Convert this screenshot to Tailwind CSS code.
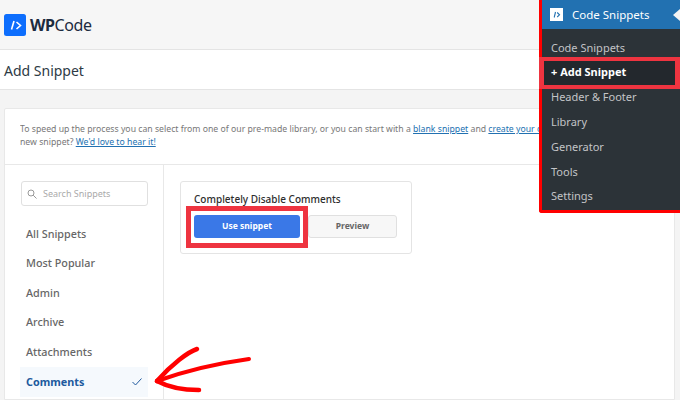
<!DOCTYPE html>
<html lang="en">
<head>
  <meta charset="UTF-8">
  <script src="https://cdn.jsdelivr.net/npm/@tailwindcss/browser@4"></script>
  <title>Add Snippet</title>
</head>
<body class="relative w-[680px] h-[400px] overflow-hidden bg-[#f4f4f4] font-['Noto_Sans',sans-serif] text-[#3c434a]">
  <header class="h-[50px] bg-[#f6f6f6] border-b border-[#e4e4e4] pl-1 flex items-center gap-[4px]">
    <svg class="w-[22px] h-[22px]" viewBox="0 0 22 22"><rect width="22" height="22" rx="2.5" fill="#0d6efd"/><path d="M10 7 L7.5 15.5" stroke="#fff" stroke-width="1.6" fill="none"/><path d="M12.5 8 L16.5 11.5 L12.5 15" stroke="#fff" stroke-width="1.6" fill="none"/></svg>
    <span class="text-[16px] leading-none text-[#1c2b3f] tracking-[-0.4px]"><b class="font-bold">WP</b>Code</span>
  </header>
  <div class="h-[40px] bg-white border-b border-[#e4e4e4] pl-1 pt-[1px] flex items-center text-[14px] text-[#2d3a45]">Add Snippet</div>

  <main class="mt-[18px] ml-1 mr-[5px] h-[292px] bg-white border border-[#e8e8e8] rounded-t-[2px]">
    <section class="h-[56px] border-b border-[#e8e8e8] pl-[15px] pt-[14px] text-[8.7px] leading-[13px] text-[#777]">
      <p class="w-[519px] overflow-hidden whitespace-nowrap">To speed up the process you can select from one of our pre-made library, or you can start with a <a class="text-[#2271b1] underline">blank snippet</a> and <a class="text-[#2271b1] underline">create your own</a>. Have a suggestion for a<br>new snippet? <a class="text-[#2271b1] underline">We'd love to hear it!</a></p>
    </section>
    <div class="flex h-[235px]">
      <aside class="w-[159px] border-r border-[#e8e8e8] pl-[15px] pr-[15px] pt-4 shrink-0">
        <div class="h-[25px] ml-[1px] border border-[#e0e0e0] rounded-[3px] flex items-center gap-[6px] pl-[5px] pt-[1px] text-[9px] text-[#aaa]">
          <svg class="w-[10px] h-[10px]" viewBox="0 0 10 10" fill="none" stroke="#999" stroke-width="1"><circle cx="4" cy="4" r="3"/><path d="M6.2 6.2 L9.5 9.5"/></svg>
          <span>Search Snippets</span>
        </div>
        <ul class="mt-[13px] text-[10.8px] font-medium text-[#666]">
          <li class="h-[29.6px] pl-[6px] flex items-center">All Snippets</li>
          <li class="h-[29.6px] pl-[6px] flex items-center">Most Popular</li>
          <li class="h-[29.6px] pl-[6px] flex items-center">Admin</li>
          <li class="h-[29.6px] pl-[6px] flex items-center">Archive</li>
          <li class="h-[29.6px] pl-[6px] flex items-center">Attachments</li>
          <li class="h-[30px] pl-[6px] pr-[6px] flex items-center justify-between bg-[#f5f9fd] font-bold text-[#205a9e]">
            <span>Comments</span>
            <svg class="w-[10px] h-[8px]" viewBox="0 0 10 8" fill="none" stroke="#205a9e" stroke-width="1"><path d="M0.5 4 L3.5 7 L9.5 0.5"/></svg>
          </li>
        </ul>
      </aside>
      <div class="pl-4 pt-4">
        <article class="w-[232px] h-[73px] border border-[#e4e4e4] rounded-[3px] px-[13px] pt-[10px]">
          <h3 class="text-[10px] leading-[14px] font-medium text-[#2d2d2d]">Completely Disable Comments</h3>
          <div class="flex mt-[9px] gap-[8px]">
            <button class="w-[106px] h-[23px] rounded-[3px] bg-[#3a78e7] text-white text-[8.5px] font-bold">Use snippet</button>
            <button class="w-[89px] h-[23px] rounded-[3px] bg-[#f7f7f7] border border-[#e0e0e0] text-[#666] text-[8.5px] font-bold">Preview</button>
          </div>
        </article>
      </div>
    </div>
  </main>

  <!-- screenshot annotations and the wp menu sit over the page -->
  <nav class="absolute left-[539px] top-0 w-[141px] h-[213px] border-[3px] border-t-0 border-r-0 border-[#f00] rounded-bl-[3px] bg-[#2c3338] text-[#c3c4c7] text-[11px]">
    <div class="h-[29px] bg-[#2271b1] flex items-center pl-[8px] gap-[9px] text-white text-[11.5px]">
      <svg class="w-[13px] h-[13px]" viewBox="0 0 13 13"><rect width="13" height="13" fill="#fff"/><path d="M5.5 4 L4.2 9.5" stroke="#2271b1" stroke-width="1.1" fill="none"/><path d="M7.2 4.5 L9.5 6.8 L7.2 9" stroke="#2271b1" stroke-width="1.1" fill="none"/></svg>
      <span>Code Snippets</span>
    </div>
    <ul class="pt-[7px] pl-[9px]">
      <li class="h-[24.7px] flex items-center">Code Snippets</li>
      <li class="h-[32.7px] -my-[4px] -ml-[12px] relative pl-[7px] pb-[2px] flex items-center border-y-4 border-x-[5px] border-[#ee3440] bg-[#23282d] font-bold text-white">+ Add Snippet</li>
      <li class="h-[24.7px] flex items-center">Header &amp; Footer</li>
      <li class="h-[24.7px] flex items-center">Library</li>
      <li class="h-[24.7px] flex items-center">Generator</li>
      <li class="h-[24.7px] flex items-center">Tools</li>
      <li class="h-[24.7px] flex items-center">Settings</li>
    </ul>
  </nav>
  <div class="absolute left-[673px] top-[9px] w-0 h-0 border-y-[6px] border-y-transparent border-r-[7px] border-r-[#f4f4f4]"></div>
  <div class="absolute left-[186px] top-[206px] w-[122px] h-[42px] border-[5px] border-[#ee3440]"></div>
  <svg class="absolute left-[150px] top-[340px] w-[110px] h-[60px]" viewBox="0 0 110 60" fill="none" stroke="#f00" stroke-linecap="round" stroke-linejoin="round">
    <path d="M47 9 C38 12 22 24 7 41" stroke-width="4.5"/>
    <path d="M99 19 C70 23 35 31 7 41" stroke-width="4"/>
    <path d="M7 41 C18 47 32 50 49 50" stroke-width="4.5"/>
  </svg>
</body>
</html>
